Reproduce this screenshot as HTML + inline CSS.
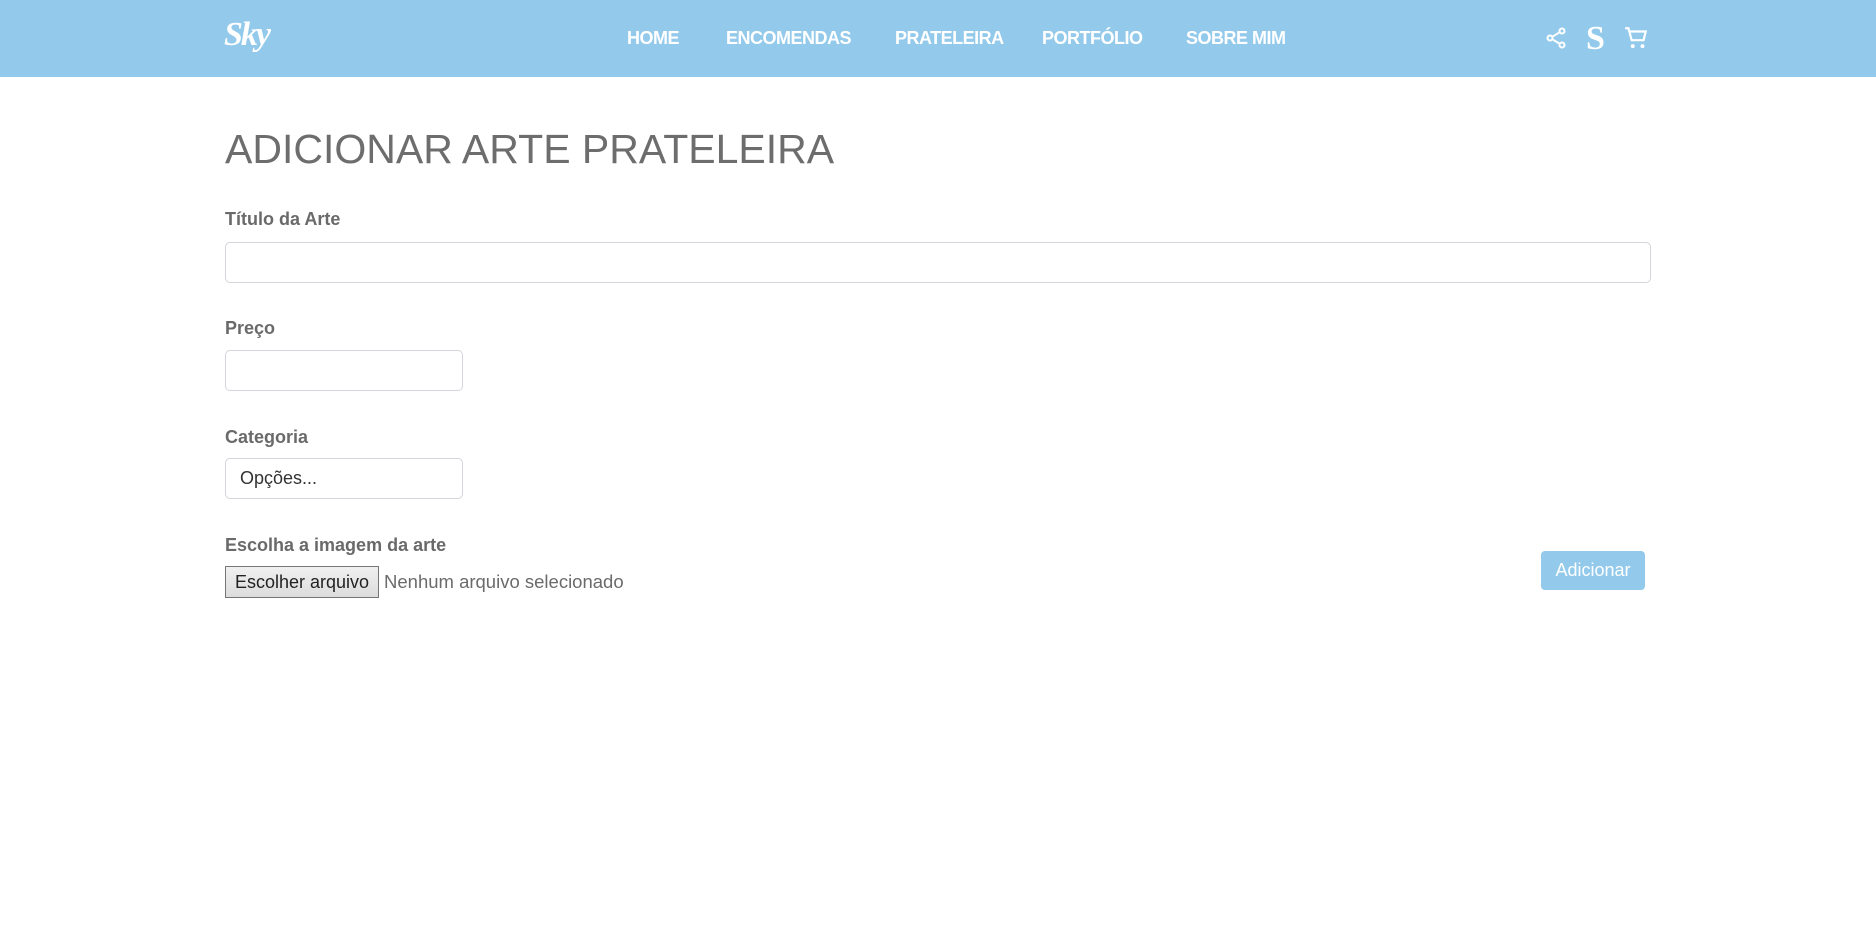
<!DOCTYPE html>
<html><head><meta charset="utf-8"><style>
*{box-sizing:border-box;margin:0;padding:0}
body{width:1876px;height:930px;background:#fff;font-family:"Liberation Sans",sans-serif;color:#6b6b6b;position:relative;overflow:hidden}
.hdr{position:absolute;left:0;top:0;width:1876px;height:77px;background:#93caeb}
.logo{position:absolute;left:224px;top:16px;font-family:"Liberation Serif",serif;font-weight:bold;font-style:italic;color:#fff;font-size:34px;letter-spacing:-2px}
.nav a{position:absolute;top:28px;color:#fff;font-weight:bold;font-size:18px;text-decoration:none;letter-spacing:-0.5px}
.abs{position:absolute}
h1{position:absolute;left:225px;top:126px;font-weight:normal;font-size:41px;color:#6d6d6d;letter-spacing:0px}
label{position:absolute;left:225px;font-size:18px;font-weight:bold;color:#6a6a6a}
.inp{position:absolute;border:1px solid #d2d5da;border-radius:5px;background:#fff}
</style></head><body>
<div class="hdr">
<div class="logo">Sky</div>
<div class="nav">
<a style="left:627px">HOME</a>
<a style="left:726px">ENCOMENDAS</a>
<a style="left:895px">PRATELEIRA</a>
<a style="left:1042px">PORTFÓLIO</a>
<a style="left:1186px">SOBRE MIM</a>
</div>
<svg class="abs" style="left:1544px;top:26px" width="24" height="24" viewBox="0 0 24 24"><g fill="none" stroke="#fff" stroke-width="2"><circle cx="18" cy="5" r="2.5"/><circle cx="6" cy="12" r="2.5"/><circle cx="18" cy="19" r="2.5"/><path d="M8.2 10.8l7.6-4.6M8.2 13.2l7.6 4.6"/></g></svg>
<div class="abs" style="left:1586px;top:20px;color:#fff;font-family:'Liberation Serif',serif;font-weight:bold;font-size:34px">S</div>
<svg class="abs" style="left:1623px;top:25px" width="26" height="26" viewBox="0 0 24 24"><g fill="none" stroke="#fff" stroke-width="2"><path d="M2 3h3l3 11h11l2-8H6.5"/></g><circle cx="9" cy="19.5" r="1.8" fill="#fff"/><circle cx="18" cy="19.5" r="1.8" fill="#fff"/></svg>
</div>
<h1>ADICIONAR ARTE PRATELEIRA</h1>
<label style="top:209px">Título da Arte</label>
<div class="inp" style="left:225px;top:242px;width:1426px;height:41px"></div>
<label style="top:318px">Preço</label>
<div class="inp" style="left:225px;top:350px;width:238px;height:41px"></div>
<label style="top:427px">Categoria</label>
<div class="inp" style="left:225px;top:458px;width:238px;height:41px;padding:9px 14px;font-size:18px;color:#333">Opções...</div>
<label style="top:535px">Escolha a imagem da arte</label>
<div class="abs" style="left:225px;top:566px;width:154px;height:32px;border:1px solid #767676;background:linear-gradient(#f0f0f0,#dcdcdc);font-size:18px;color:#222;text-align:center;line-height:30px">Escolher arquivo</div>
<div class="abs" style="left:384px;top:571px;font-size:18.5px;color:#6b6b6b">Nenhum arquivo selecionado</div>
<div class="abs" style="left:1541px;top:551px;width:104px;height:39px;background:#93caeb;border-radius:4px;color:#fff;font-size:18px;text-align:center;line-height:39px">Adicionar</div>
</body></html>
